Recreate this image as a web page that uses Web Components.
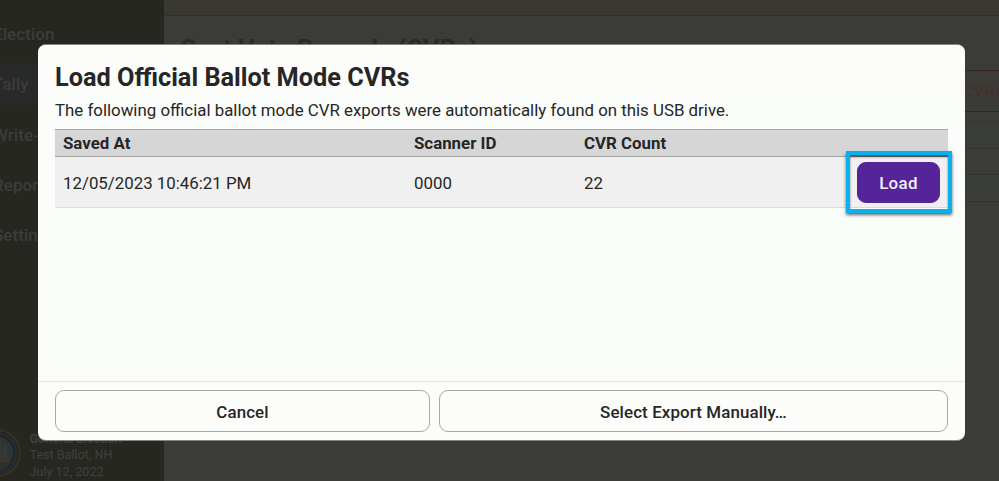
<!DOCTYPE html>
<html lang="en">
<head>
<meta charset="utf-8">
<title>Load CVRs</title>
<style>
html,body{margin:0;height:481px;overflow:hidden;background:#3b3b38;font-family:Roboto,"Liberation Sans",sans-serif;color:#262626}
</style>
</head>
<body>
<cvr-app></cvr-app>

<template id="t-app">
<style>
:host{display:grid;grid-template-columns:164px 1fr;width:999px;height:481px;overflow:hidden;position:relative}
cvr-dialog{position:absolute;left:38px;top:44px}
</style>
<side-bar>
  <nav-item>Election</nav-item>
  <nav-item active>Tally</nav-item>
  <nav-item>Write-Ins</nav-item>
  <nav-item>Reports</nav-item>
  <nav-item>Settings</nav-item>
</side-bar>
<tally-screen></tally-screen>
<cvr-dialog>
  <span slot="title">Load Official Ballot Mode CVRs</span>
  <span slot="text">The following official ballot mode CVR exports were automatically found on this USB drive.</span>
  <export-table></export-table>
  <app-button slot="actions">Cancel</app-button>
  <app-button slot="actions">Select Export Manually…</app-button>
</cvr-dialog>
</template>

<template id="t-side">
<style>
:host{display:flex;flex-direction:column;justify-content:space-between;background:#272722;height:481px;overflow:hidden}
nav{display:flex;flex-direction:column;gap:8.3px;padding-top:13px}
footer{display:flex;align-items:center;height:56px;margin-left:-27px;gap:8.5px;color:#3f3f3d;font-size:12.6px;line-height:16.4px;white-space:nowrap}
footer div{padding-top:5px}
b{font-weight:700}
svg{display:block;flex:none}
</style>
<nav><slot></slot></nav>
<footer>
<svg width="48" height="48" viewBox="0 0 48 48">
<circle cx="24" cy="24" r="23" fill="#20262d" stroke="#37331f" stroke-width="2"/>
<circle cx="24" cy="24" r="19.5" fill="none" stroke="#34342f" stroke-width="2" stroke-dasharray="1.5 2"/>
<circle cx="24" cy="24" r="15.5" fill="#2c3436" stroke="#3a3622"/>
<path d="M9 27h30a15 15 0 0 1-30 0z" fill="#2b322e"/>
<path d="M10 29l5-3 7 2 5-2 11 2-3 5H15z" fill="#3c342d"/>
<path d="M20 28V14M27 28V12M33 27V16M20 15l-5 9h5M27 14l-5 10h5M33 17l-4 8h4" stroke="#41403b" fill="none"/>
</svg>
<div><b>General Election</b><br>Test Ballot, NH<br>July 12, 2022</div>
</footer>
</template>

<template id="t-nav">
<style>
:host{display:flex;align-items:center;height:42px;margin-left:-20px;padding-left:13px;box-sizing:border-box;font-size:16.9px;font-weight:500;letter-spacing:.1px;color:#3c3c3a;white-space:nowrap}
:host([active]){background:#272a28}
</style>
<slot></slot>
</template>

<template id="t-tally">
<style>
:host{display:block;overflow:hidden;white-space:nowrap}
header{height:15px;background:#393932;border-bottom:1px solid #30302d}
h1{margin:19px 0 0 16px;font-size:25px;line-height:30px;font-weight:700;color:#2a2a28;letter-spacing:.2px;height:35px}
.bar{display:flex;justify-content:flex-end;margin-right:-14px}
.btn{box-sizing:border-box;height:42px;width:190px;border:1px solid #382624;padding-right:8px;display:flex;align-items:center;justify-content:flex-end;font-size:17px;font-weight:500;color:#46302d}
.rows{margin-top:9px;border-top:1px solid #353532}
.rows div{height:25.7px;border-bottom:1px solid #333331;background:#3a3c38}
</style>
<header></header>
<h1>Cast Vote Records (CVRs)</h1>
<div class="bar"><div class="btn">Remove CVRs</div></div>
<div class="rows"><div></div><div></div><div></div></div>
</template>

<template id="t-dialog">
<style>
:host{display:flex;flex-direction:column;width:927px;height:397px;box-sizing:border-box;border-radius:8px;background:#fcfcfa;overflow:hidden;border-top:1px solid #858582;border-bottom:1px solid #858582}
main{flex:1;padding:16px 17px 0;background:linear-gradient(#fcfcfa 0 45px,#fbfdfa 50px)}
h1{margin:0;padding-top:1px;font-size:25.3px;line-height:32px;font-weight:700;white-space:nowrap}
p{margin:5px 0 0;font-size:16.85px;line-height:23px;white-space:nowrap}
.tbl{margin-top:7px}
footer{display:grid;grid-template-columns:375px 1fr;gap:9px;height:59px;box-sizing:border-box;padding:8px 17px;border-top:1px solid #e6e6e4}
</style>
<main><h1><slot name="title"></slot></h1><p><slot name="text"></slot></p><div class="tbl"><slot></slot></div></main>
<footer><slot name="actions"></slot></footer>
</template>

<template id="t-table">
<style>
:host{display:block;font-size:16.85px}
.r{display:grid;grid-template-columns:351px 170px 1fr auto;align-items:center;padding:0 8px;box-sizing:border-box}
.h{height:28px;background:#d6d6d7;border-top:1px solid #a7a7a7;border-bottom:1px solid #a3a3a2;font-weight:700}
.d{height:51px;background:#f0f0f0;border-bottom:1px solid #dcdcdc}
.d>span{padding-top:1px}
.cell{position:relative;display:block}
.mark{position:absolute;left:-11px;top:-11px;width:98px;height:54px;border:4px solid #0bb0ee;box-shadow:0 2px 3px #0009,inset 0 2px 2px #0009}
app-button{width:83px}
</style>
<div class="r h"><span>Saved At</span><span>Scanner ID</span><span>CVR Count</span></div>
<div class="r d"><span>12/05/2023 10:46:21 PM</span><span>0000</span><span>22</span><div class="cell"><app-button primary>Load</app-button><div class="mark"></div></div></div>
</template>

<template id="t-button">
<style>
:host{display:flex;align-items:center;justify-content:center;height:42px;box-sizing:border-box;padding-top:1px;border:1px solid #a8a8a6;border-radius:9px;font-size:16.9px;letter-spacing:.12px;font-weight:500;white-space:nowrap}
:host([primary]){height:41px;background:#562499;border-color:#562499;color:#f5f0fa;letter-spacing:.35px}
</style>
<slot></slot>
</template>

<script>
const define = (name, templateId) => customElements.define(name, class extends HTMLElement {
  constructor() {
    super();
    this.attachShadow({ mode: "open" }).append(document.getElementById(templateId).content.cloneNode(true));
  }
});
define("app-button", "t-button");
define("nav-item", "t-nav");
define("side-bar", "t-side");
define("tally-screen", "t-tally");
define("export-table", "t-table");
define("cvr-dialog", "t-dialog");
define("cvr-app", "t-app");
</script>
</body>
</html>
